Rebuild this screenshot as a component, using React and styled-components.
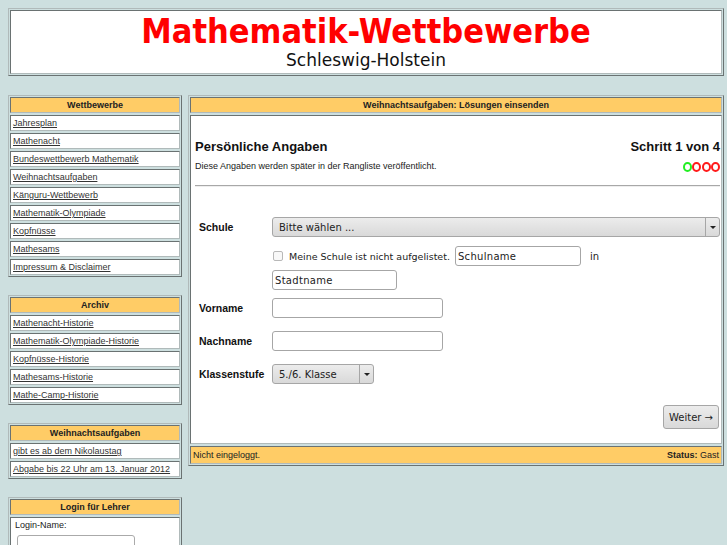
import React from "react";
import styled, { createGlobalStyle } from "styled-components";

/**
 * Styling
 */

const GlobalStyle = createGlobalStyle`
  html, body {
    margin: 0;
    padding: 0;
    background: #cddfdf;
  }
  body {
    font-family: "Liberation Sans", Arial, sans-serif;
    color: #222;
  }
`;

const Page = styled.div`
  padding: 8px 3px 0 8px;
  display: flex;
  flex-direction: column;
  gap: 19px;
`;

const Box = styled.div`
  border: 1px solid;
  border-color: #b0baba #6a7272 #6a7272 #b0baba;
  padding: 1px;
  display: flex;
  flex-direction: column;
  gap: 2px;
  flex: ${(p) => (p.$grow ? 1 : "none")};
`;

const Cell = styled.div`
  border: 1px solid;
  border-color: #6a7272 #b0baba #b0baba #6a7272;
  background: ${(p) => (p.$head ? "#ffcc66" : "#fff")};
`;

const Banner = styled(Cell)`
  height: 62px;
  display: flex;
  flex-direction: column;
  align-items: center;
`;

const Title = styled.h1`
  margin: 0;
  font-family: "DejaVu Sans Condensed", "DejaVu Sans", sans-serif;
  font-stretch: condensed;
  font-weight: bold;
  font-size: 34px;
  line-height: 40px;
  color: #ff0000;
`;

const Subtitle = styled.div`
  font-family: "DejaVu Sans", sans-serif;
  font-size: 17px;
  line-height: 19px;
  color: #111;
`;

const Columns = styled.div`
  display: flex;
  align-items: flex-start;
  gap: 6px;
`;

const Sidebar = styled.div`
  display: flex;
  flex-direction: column;
  gap: 18px;
  width: 174px;
`;

const HeadCell = styled(Cell)`
  font-size: 9px;
  font-weight: bold;
  line-height: 14px;
  text-align: center;
  padding: 0 2px;
  color: #222;
`;

const LinkCell = styled(Cell)`
  font-size: 9px;
  line-height: 14px;
  padding: 0 2px;
  white-space: nowrap;
  overflow: hidden;
`;

const NavLink = styled.a`
  color: #333;
  text-decoration: underline;
  cursor: pointer;
`;

const LoginCell = styled(Cell)`
  font-size: 9px;
  line-height: 14px;
  padding: 0 4px;
  height: 40px;
`;

const LoginInput = styled.input`
  display: block;
  margin: 3px 0 0 2px;
  width: 118px;
  height: 18px;
  box-sizing: border-box;
  border: 1px solid #aaa;
  border-radius: 3px;
  background: #fff;
`;

const Content = styled(Cell)`
  height: 327px;
  padding: 0 1px 0 4px;
  display: flex;
  flex-direction: column;
`;

const StepRow = styled.div`
  display: flex;
  justify-content: space-between;
  align-items: center;
  margin-top: ${(p) => p.$top || 0}px;
`;

const Heading = styled.div`
  font-size: 13px;
  line-height: 16px;
  font-weight: bold;
  color: #111;
`;

const Note = styled.div`
  font-size: 9px;
  line-height: 11px;
`;

const Dots = styled.div`
  display: flex;
  gap: 0.5px;
`;

const Dot = styled.span`
  display: inline-block;
  width: 9px;
  height: 10px;
  box-sizing: border-box;
  border: 2px solid ${(p) => (p.$done ? "#22ee22" : "#ff1a1a")};
  border-radius: 50%;
`;

const Rule = styled.hr`
  margin: 13px 0 0;
  border: 0;
  border-top: 1px solid #a8a8a8;
  border-bottom: 1px solid #eee;
`;

const Form = styled.div`
  display: flex;
  flex-direction: column;
  margin-top: 30px;
  padding-left: 4px;
`;

const FormRow = styled.div`
  display: flex;
  align-items: center;
  margin-top: ${(p) => p.$top || 0}px;
  padding-left: ${(p) => (p.$indent ? 73 : 0)}px;
`;

const Label = styled.div`
  width: 73px;
  flex: none;
  font-size: 10.5px;
  font-weight: bold;
  color: #111;
`;

const ControlText = `
  font-family: "DejaVu Sans", sans-serif;
  font-size: 10px;
  color: #222;
`;

const SelectWrap = styled.div`
  display: flex;
  align-items: stretch;
  width: ${(p) => p.$width}px;
  height: 20px;
  box-sizing: border-box;
  border: 1px solid #a6a6a6;
  border-radius: 3px;
  background: linear-gradient(#ececec, #d9d9d9);
`;

const Select = styled.select`
  flex: 1;
  appearance: none;
  border: 0;
  background: transparent;
  padding: 0 6px;
  ${ControlText}
  outline: none;
`;

const Arrow = styled.span`
  width: 13px;
  border-left: 1px solid #a6a6a6;
  display: flex;
  align-items: center;
  justify-content: center;
  &::after {
    content: "";
    border-left: 3px solid transparent;
    border-right: 3px solid transparent;
    border-top: 3px solid #222;
  }
`;

const TextInput = styled.input`
  width: ${(p) => p.$width}px;
  height: 20px;
  box-sizing: border-box;
  border: 1px solid #a6a6a6;
  border-radius: 3px;
  padding: 0 2px;
  ${ControlText}
  letter-spacing: 0.3px;
  background: #fff;
  &::placeholder {
    color: #222;
  }
`;

const Check = styled.input`
  appearance: none;
  width: 10px;
  height: 10px;
  margin: 0 6px 0 1px;
  border: 1px solid #b8b8b8;
  border-radius: 2px;
  background: #f8f8f8;
`;

const CheckLabel = styled.span`
  ${ControlText}
  font-size: 9.5px;
  margin-right: 5px;
`;

const Small = styled.span`
  ${ControlText}
  margin-left: 9px;
`;

const Actions = styled.div`
  display: flex;
  justify-content: flex-end;
  margin: 21px 1px 0 0;
`;

const NextButton = styled.button`
  width: 56px;
  height: 24px;
  border: 1px solid #a6a6a6;
  border-radius: 3px;
  background: linear-gradient(#ececec, #d9d9d9);
  ${ControlText}
  padding: 0;
`;

const Footer = styled(HeadCell)`
  display: flex;
  justify-content: space-between;
  font-weight: normal;
  line-height: 16px;
`;

const wettbewerbe = [
  "Jahresplan",
  "Mathenacht",
  "Bundeswettbewerb Mathematik",
  "Weihnachtsaufgaben",
  "Känguru-Wettbewerb",
  "Mathematik-Olympiade",
  "Kopfnüsse",
  "Mathesams",
  "Impressum & Disclaimer",
];

const archiv = [
  "Mathenacht-Historie",
  "Mathematik-Olympiade-Historie",
  "Kopfnüsse-Historie",
  "Mathesams-Historie",
  "Mathe-Camp-Historie",
];

const weihnachten = ["gibt es ab dem Nikolaustag", "Abgabe bis 22 Uhr am 13. Januar 2012"];

function NavBox({ title, links }) {
  return (
    <Box>
      <HeadCell $head>{title}</HeadCell>
      {links.map((l) => (
        <LinkCell key={l}>
          <NavLink>{l}</NavLink>
        </LinkCell>
      ))}
    </Box>
  );
}

function App() {
  return (
    <>
      <GlobalStyle />
      <Page>
        <Box>
          <Banner>
            <Title>Mathematik-Wettbewerbe</Title>
            <Subtitle>Schleswig-Holstein</Subtitle>
          </Banner>
        </Box>

        <Columns>
          <Sidebar>
            <NavBox title="Wettbewerbe" links={wettbewerbe} />
            <NavBox title="Archiv" links={archiv} />
            <NavBox title="Weihnachtsaufgaben" links={weihnachten} />
            <Box>
              <HeadCell $head>Login für Lehrer</HeadCell>
              <LoginCell>
                Login-Name:
                <LoginInput type="text" />
              </LoginCell>
            </Box>
          </Sidebar>

          <Box $grow>
            <HeadCell $head>Weihnachtsaufgaben: Lösungen einsenden</HeadCell>
            <Content>
              <StepRow $top={23}>
                <Heading>Persönliche Angaben</Heading>
                <Heading>Schritt 1 von 4</Heading>
              </StepRow>
              <StepRow $top={6}>
                <Note>Diese Angaben werden später in der Rangliste veröffentlicht.</Note>
                <Dots>
                  <Dot $done />
                  <Dot />
                  <Dot />
                  <Dot />
                </Dots>
              </StepRow>
              <Rule />

              <Form>
                <FormRow>
                  <Label>Schule</Label>
                  <SelectWrap $width={448}>
                    <Select defaultValue="">
                      <option value="">Bitte wählen ...</option>
                    </Select>
                    <Arrow />
                  </SelectWrap>
                </FormRow>
                <FormRow $indent $top={9}>
                  <Check type="checkbox" />
                  <CheckLabel>Meine Schule ist nicht aufgelistet.</CheckLabel>
                  <TextInput $width={126} placeholder="Schulname" />
                  <Small>in</Small>
                </FormRow>
                <FormRow $indent $top={4}>
                  <TextInput $width={125} placeholder="Stadtname" />
                </FormRow>
                <FormRow $top={8}>
                  <Label>Vorname</Label>
                  <TextInput $width={171} />
                </FormRow>
                <FormRow $top={13}>
                  <Label>Nachname</Label>
                  <TextInput $width={171} />
                </FormRow>
                <FormRow $top={13}>
                  <Label>Klassenstufe</Label>
                  <SelectWrap $width={102}>
                    <Select defaultValue="56">
                      <option value="56">5./6. Klasse</option>
                    </Select>
                    <Arrow />
                  </SelectWrap>
                </FormRow>
              </Form>

              <Actions>
                <NextButton>Weiter →</NextButton>
              </Actions>
            </Content>
            <Footer $head>
              <span>Nicht eingeloggt.</span>
              <span>
                <b>Status:</b> Gast
              </span>
            </Footer>
          </Box>
        </Columns>
      </Page>
    </>
  );
}

export default App;
